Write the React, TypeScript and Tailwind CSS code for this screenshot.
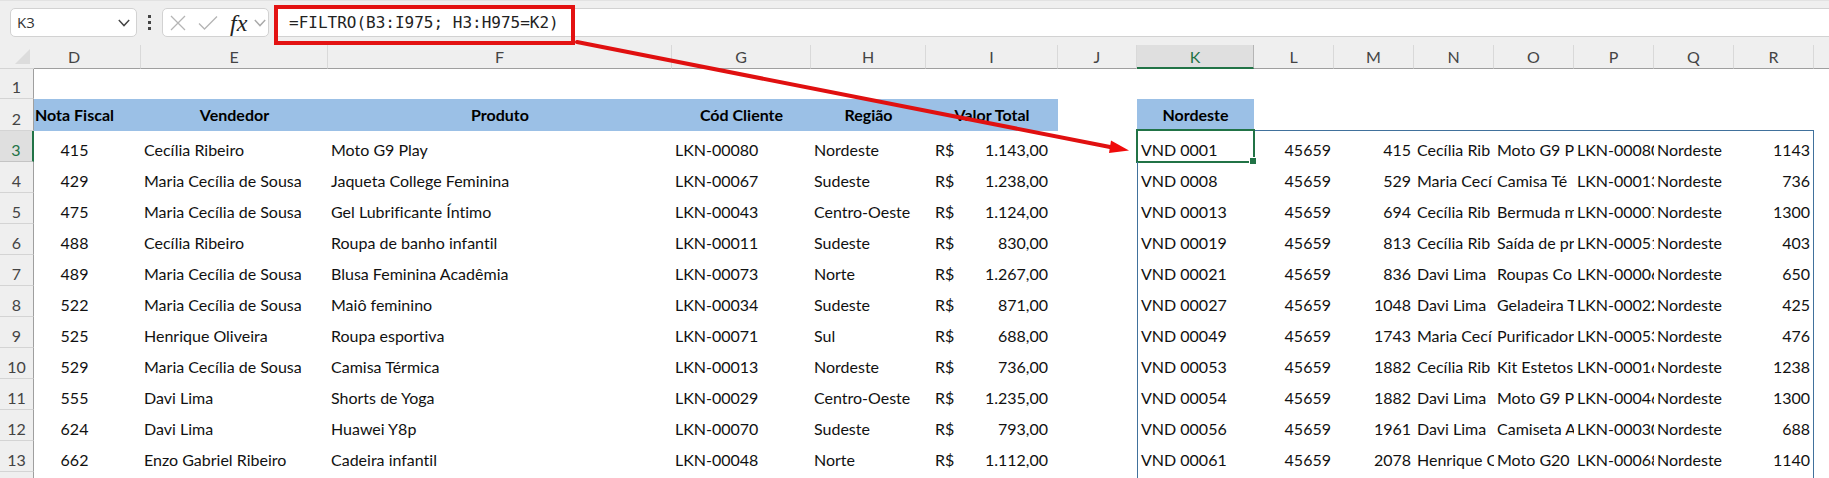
import React from "react";

type Sale = [string, string, string, string, string, string];
type Spill = [string, string, string, string, string, string, string];

const sales: Sale[] = [
  ["415", "Cecília Ribeiro", "Moto G9 Play", "LKN-00080", "Nordeste", "1.143,00"],
  ["429", "Maria Cecília de Sousa", "Jaqueta College Feminina", "LKN-00067", "Sudeste", "1.238,00"],
  ["475", "Maria Cecília de Sousa", "Gel Lubrificante Íntimo", "LKN-00043", "Centro-Oeste", "1.124,00"],
  ["488", "Cecília Ribeiro", "Roupa de banho infantil", "LKN-00011", "Sudeste", "830,00"],
  ["489", "Maria Cecília de Sousa", "Blusa Feminina Acadêmia", "LKN-00073", "Norte", "1.267,00"],
  ["522", "Maria Cecília de Sousa", "Maiô feminino", "LKN-00034", "Sudeste", "871,00"],
  ["525", "Henrique Oliveira", "Roupa esportiva", "LKN-00071", "Sul", "688,00"],
  ["529", "Maria Cecília de Sousa", "Camisa Térmica", "LKN-00013", "Nordeste", "736,00"],
  ["555", "Davi Lima", "Shorts de Yoga", "LKN-00029", "Centro-Oeste", "1.235,00"],
  ["624", "Davi Lima", "Huawei Y8p", "LKN-00070", "Sudeste", "793,00"],
  ["662", "Enzo Gabriel Ribeiro", "Cadeira infantil", "LKN-00048", "Norte", "1.112,00"],
];

const spill: Spill[] = [
  ["VND 0001", "415", "Cecília Rib", "Moto G9 P", "LKN-00080", "Nordeste", "1143"],
  ["VND 0008", "529", "Maria Cecí", "Camisa Té", "LKN-00013", "Nordeste", "736"],
  ["VND 00013", "694", "Cecília Rib", "Bermuda m", "LKN-00007", "Nordeste", "1300"],
  ["VND 00019", "813", "Cecília Rib", "Saída de pr", "LKN-00051", "Nordeste", "403"],
  ["VND 00021", "836", "Davi Lima", "Roupas Co", "LKN-00006", "Nordeste", "650"],
  ["VND 00027", "1048", "Davi Lima", "Geladeira T", "LKN-00022", "Nordeste", "425"],
  ["VND 00049", "1743", "Maria Cecí", "Purificador", "LKN-00053", "Nordeste", "476"],
  ["VND 00053", "1882", "Cecília Rib", "Kit Estetos", "LKN-00016", "Nordeste", "1238"],
  ["VND 00054", "1882", "Davi Lima", "Moto G9 P", "LKN-00046", "Nordeste", "1300"],
  ["VND 00056", "1961", "Davi Lima", "Camiseta A", "LKN-00030", "Nordeste", "688"],
  ["VND 00061", "2078", "Henrique O", "Moto G20", "LKN-00068", "Nordeste", "1140"],
];

const columns = [
  { name: "D", width: "w-[107px]" },
  { name: "E", width: "w-[187px]" },
  { name: "F", width: "w-[344px]" },
  { name: "G", width: "w-[139px]" },
  { name: "H", width: "w-[115px]" },
  { name: "I", width: "w-[132px]" },
  { name: "J", width: "w-[79px]" },
  { name: "K", width: "w-[117px]" },
  { name: "L", width: "w-[80px]" },
  { name: "M", width: "w-[80px]" },
  { name: "N", width: "w-[80px]" },
  { name: "O", width: "w-[80px]" },
  { name: "P", width: "w-[80px]" },
  { name: "Q", width: "w-[80px]" },
  { name: "R", width: "w-[80px]" },
];

function Chevron({ className }: { className: string }) {
  return (
    <svg viewBox="0 0 12 8" className={className} fill="none" stroke="currentColor" strokeWidth="1.4" aria-hidden="true">
      <path d="M0.8 1 L6 6.6 L11.2 1" />
    </svg>
  );
}

function FormulaBar() {
  return (
    <div className="flex h-[45px] items-start border-t border-[#e2e2e2] pt-[7px] pl-[10px]">
      <div className="flex h-[29px] w-[127px] items-center rounded-[5px] border border-[#d2d2d2] bg-white pr-[6px] pl-[6px]">
        <input
          aria-label="Caixa de nome"
          defaultValue="K3"
          className="min-w-0 flex-1 bg-transparent font-['Open_Sans',sans-serif] text-[15px] text-[#333] outline-none"
        />
        <button aria-label="Abrir caixa de nome" className="text-[#444]">
          <Chevron className="h-2 w-3" />
        </button>
      </div>
      <div className="flex h-[29px] w-[25px] flex-col items-center justify-center gap-[3px]">
        <span className="size-[3px] bg-[#444]" />
        <span className="size-[3px] bg-[#444]" />
        <span className="size-[3px] bg-[#444]" />
      </div>
      <div className="flex h-[29px] w-[107px] items-center rounded-[5px] border border-[#d2d2d2] bg-white pr-[2px] pl-[7px]">
        <button aria-label="Cancelar" className="text-[#b5b5b5]">
          <svg viewBox="0 0 16 16" className="size-4" fill="none" stroke="currentColor" strokeWidth="1.3">
            <path d="M1 1 L15 15 M15 1 L1 15" />
          </svg>
        </button>
        <button aria-label="Inserir" className="ml-3 text-[#b5b5b5]">
          <svg viewBox="0 0 20 16" className="h-4 w-5" fill="none" stroke="currentColor" strokeWidth="1.3">
            <path d="M1 8.5 L6.5 14 L19 1.5" />
          </svg>
        </button>
        <button
          aria-label="Inserir função"
          className="ml-3 font-['Liberation_Serif',serif] text-[24px] leading-6 text-[#222] italic"
        >
          fx
        </button>
        <button aria-label="Mais funções" className="ml-auto text-[#aaa]">
          <Chevron className="h-2 w-3" />
        </button>
      </div>
      <div className="relative ml-[6px] h-[29px] flex-1 border-y border-[#d2d2d2] bg-white">
        <input
          aria-label="Barra de fórmulas"
          defaultValue="=FILTRO(B3:I975; H3:H975=K2)"
          className="h-full w-full bg-transparent pl-[14px] font-['DejaVu_Sans_Mono',monospace] text-[16px] text-[#222] outline-none"
        />
        <div className="pointer-events-none absolute -top-[4px] -left-[1px] h-[40px] w-[301px] border-4 border-[#e31212]" />
      </div>
    </div>
  );
}

function ColumnHeader({ name }: { name: string }) {
  return (
    <th scope="col" className="p-0 align-bottom">
      <div
        className={
          name === "K"
            ? "flex h-6 items-center justify-center border-r border-b-2 border-r-[#b5b5b5] border-b-[#217346] bg-[#dfdfdf] pt-[2px] text-[#217346]"
            : name === "D"
              ? "flex h-6 items-center justify-center border-r border-b border-r-[#d9d9d9] border-b-[#9f9f9f] pt-[1px] pr-[26px]"
              : "flex h-6 items-center justify-center border-r border-b border-r-[#d9d9d9] border-b-[#9f9f9f] pt-[1px]"
        }
      >
        {name}
      </div>
    </th>
  );
}

function RowHeader({ n }: { n: number }) {
  return (
    <th
      scope="row"
      className={
        n === 3
          ? "border-r-2 border-b border-r-[#217346] border-b-[#c4c4c4] bg-[#dfdfdf] p-0 align-bottom font-normal text-[#217346]"
          : "border-r border-b border-r-[#9f9f9f] border-b-[#d4d4d4] bg-[#efefef] p-0 align-bottom font-normal text-[#444]"
      }
    >
      {n}
    </th>
  );
}

const clip = "overflow-hidden p-0 pb-px pl-[3px] align-bottom whitespace-nowrap";
const right = "p-0 pr-[3px] pb-px text-right align-bottom";
const title = "bg-[#9bc0e6] p-0 text-center align-middle font-bold whitespace-nowrap text-black";

function Sheet() {
  return (
    <table className="w-full table-fixed border-separate border-spacing-0 bg-white font-[Lato,sans-serif] text-[16px] leading-[22px] text-[#111] [font-variant-ligatures:none]">
      <colgroup>
        <col className="w-[34px]" />
        {columns.map((c) => (
          <col key={c.name} className={c.width} />
        ))}
        <col />
      </colgroup>
      <thead className="bg-[#efefef] font-normal text-[#444]">
        <tr className="[&>th]:font-normal">
          <td className="p-0 align-bottom">
            <div className="flex h-6 items-start justify-end border-b border-[#d4d4d4] pr-1">
              <svg viewBox="0 0 15 15" className="mt-1 size-[15px]" aria-hidden="true">
                <path d="M15 0 V15 H0 Z" fill="#dcdcdc" />
              </svg>
            </div>
          </td>
          {columns.map((c) => (
            <ColumnHeader key={c.name} name={c.name} />
          ))}
          <td className="p-0 align-bottom">
            <div className="h-6 border-b border-[#9f9f9f]" />
          </td>
        </tr>
      </thead>
      <tbody>
        <tr className="h-[30px]">
          <RowHeader n={1} />
          <td colSpan={16} className="p-0" />
        </tr>
        <tr className="h-8">
          <RowHeader n={2} />
          <td className={title + " pr-[26px]"}>Nota Fiscal</td>
          <td className={title}>Vendedor</td>
          <td className={title}>Produto</td>
          <td className={title}>Cód Cliente</td>
          <td className={title}>Região</td>
          <td className={title}>Valor Total</td>
          <td className="p-0" />
          <td className={title}>Nordeste</td>
          <td colSpan={7} className="border-b border-[#41719c] p-0" />
          <td className="p-0" />
        </tr>
        {sales.map((s, i) => {
          const r = spill[i];
          return (
            <tr key={i} className="h-[31px]">
              <RowHeader n={i + 3} />
              <td className="p-0 pr-[26px] pb-px text-center align-bottom">{s[0]}</td>
              <td className={clip}>{s[1]}</td>
              <td className={clip}>{s[2]}</td>
              <td className={clip}>{s[3]}</td>
              <td className={clip}>{s[4]}</td>
              <td className="p-0 pr-[10px] pb-px pl-[9px] align-bottom">
                <div className="flex justify-between">
                  <span>R$</span>
                  <span>{s[5]}</span>
                </div>
              </td>
              <td className="p-0" />
              <td className="relative border-l border-[#41719c] p-0 pb-px pl-[3px] align-bottom">
                {r[0]}
                {i === 0 && (
                  <div className="absolute -top-[2px] -right-[1px] -bottom-[1px] -left-[2px] border-2 border-[#217346]">
                    <span className="absolute -right-[3px] -bottom-[3px] size-[6px] bg-[#217346] outline outline-white" />
                  </div>
                )}
              </td>
              <td className={right}>45659</td>
              <td className={right}>{r[1]}</td>
              <td className={clip}>{r[2]}</td>
              <td className={clip}>{r[3]}</td>
              <td className={clip}>{r[4]}</td>
              <td className={clip}>{r[5]}</td>
              <td className={right + " border-r border-[#41719c]"}>{r[6]}</td>
              <td className="p-0" />
            </tr>
          );
        })}
        <tr className="h-[31px]">
          <RowHeader n={14} />
          <td colSpan={7} className="p-0" />
          <td colSpan={8} className="border-x border-[#41719c] p-0" />
          <td className="p-0" />
        </tr>
      </tbody>
    </table>
  );
}

export default function App() {
  return (
    <main className="relative h-screen overflow-hidden bg-[#efefef]">
      <FormulaBar />
      <Sheet />
      <svg
        className="pointer-events-none absolute top-[36px] left-[570px] h-[124px] w-[564px]"
        viewBox="570 36 564 124"
        aria-hidden="true"
      >
        <path d="M577 42 L1110 147" stroke="#e01010" strokeWidth="4" strokeLinecap="round" />
        <path d="M1111 140.500 L1129 150.500 L1109 153 Z" fill="#f00b0b" />
      </svg>
    </main>
  );
}
